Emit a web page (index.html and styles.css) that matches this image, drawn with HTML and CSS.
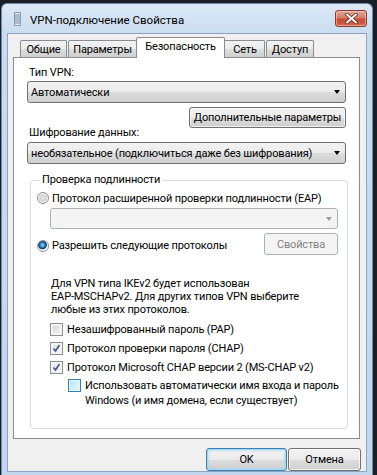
FILE: index.html
```html
<!DOCTYPE html>
<html lang="ru">
<head>
    <meta charset="UTF-8">
    <meta name="viewport" content="width=device-width, initial-scale=1.0">
    <title>VPN-подключение Свойства</title>
    <link rel="stylesheet" href="styles.css">
</head>
<body>
    <div class="window">
        <div class="titlebar">
            <svg class="app-icon" width="7" height="14" viewBox="0 0 7 14">
                <rect x="0.5" y="0.5" width="6" height="13" fill="#e8eef5" stroke="#8d9aab"/>
                <path d="M1 3h5M1 5h5M1 7h5M1 9h5M1 11h5" stroke="#6f86a6" stroke-width="1"/>
            </svg>
            <span class="title">VPN-подключение Свойства</span>
            <div class="close-btn">
                <svg width="13" height="11" viewBox="0 0 13 11">
                    <path d="M2 1.5l9 8M11 1.5l-9 8" stroke="#5a1f18" stroke-width="3.4" stroke-linecap="round"/>
                    <path d="M2 1.5l9 8M11 1.5l-9 8" stroke="#ffffff" stroke-width="2" stroke-linecap="round"/>
                </svg>
            </div>
        </div>

        <div class="client">
            <div class="tabs">
                <div class="tab tab-general">Общие</div>
                <div class="tab tab-options">Параметры</div>
                <div class="tab tab-security active">Безопасность</div>
                <div class="tab tab-network">Сеть</div>
                <div class="tab tab-access">Доступ</div>
            </div>

            <div class="panel">
                <div class="label">Тип VPN:</div>
                <div class="combo">
                    <span>Автоматически</span>
                    <span class="arrow"></span>
                </div>
                <div class="row-right">
                    <div class="btn btn-advanced">Дополнительные параметры</div>
                </div>
                <div class="label label-enc">Шифрование данных:</div>
                <div class="combo combo-enc">
                    <span>необязательное (подключиться даже без шифрования)</span>
                    <span class="arrow"></span>
                </div>

                <fieldset class="group">
                    <legend>Проверка подлинности</legend>
                    <div class="option-row">
                        <span class="radio"></span>
                        <span>Протокол расширенной проверки подлинности (EAP)</span>
                    </div>
                    <div class="combo combo-eap disabled">
                        <span></span>
                        <span class="arrow"></span>
                    </div>
                    <div class="split-row">
                        <div class="option-row">
                            <span class="radio checked"></span>
                            <span>Разрешить следующие протоколы</span>
                        </div>
                        <div class="btn btn-props disabled">Свойства</div>
                    </div>
                    <p class="note">Для VPN типа IKEv2 будет использован<br>EAP-MSCHAPv2. Для других типов VPN выберите<br>любые из этих протоколов.</p>
                    <div class="check-row first">
                        <span class="check"></span>
                        <span>Незашифрованный пароль (PAP)</span>
                    </div>
                    <div class="check-row">
                        <span class="check checked"><svg width="9" height="9" viewBox="0 0 9 9"><path d="M1.5 4.5l2 2.5 4-6" fill="none" stroke="#4c5f8c" stroke-width="1.8"/></svg></span>
                        <span>Протокол проверки пароля (CHAP)</span>
                    </div>
                    <div class="check-row">
                        <span class="check checked"><svg width="9" height="9" viewBox="0 0 9 9"><path d="M1.5 4.5l2 2.5 4-6" fill="none" stroke="#4c5f8c" stroke-width="1.8"/></svg></span>
                        <span>Протокол Microsoft CHAP версии 2 (MS-CHAP v2)</span>
                    </div>
                    <div class="check-row nested">
                        <span class="check hover"></span>
                        <span>Использовать автоматически имя входа и пароль<br>Windows (и имя домена, если существует)</span>
                    </div>
                </fieldset>
            </div>

            <div class="footer">
                <div class="btn btn-ok">OK</div>
                <div class="btn btn-cancel">Отмена</div>
            </div>
        </div>
    </div>
</body>
</html>
```

FILE: styles.css
```css
* {
    margin: 0;
    padding: 0;
    box-sizing: border-box;
}

body {
    height: 475px;
    overflow: hidden;
    background: #1a1f27;
    font-family: Roboto, 'Liberation Sans', Arial, sans-serif;
    font-size: 11px;
    letter-spacing: -0.15px;
    color: #000;
    white-space: nowrap;
}

/* Window frame */
.window {
    display: flex;
    flex-direction: column;
    width: 372px;
    height: 472px;
    margin: 3px 0 0 1px;
    padding: 0 5px 3px 5px;
    background: linear-gradient(#dce9f6 0%, #c9dcf0 30px, #c2d7ee 100%);
    border: 1px solid #6f8aa8;
    border-bottom: none;
    border-radius: 6px 6px 0 0;
}

.titlebar {
    display: flex;
    align-items: center;
    height: 29px;
    flex-shrink: 0;
}

.app-icon {
    margin-left: 7px;
}

.title {
    margin-left: 9px;
    padding-top: 2px;
    font-size: 11.5px;
    letter-spacing: 0;
    color: #000;
}

.close-btn {
    display: flex;
    align-items: center;
    justify-content: center;
    width: 32px;
    height: 17px;
    margin-left: auto;
    border: 1px solid #8a3a30;
    border-radius: 3px;
    background: linear-gradient(#e9a898 0%, #d47a68 45%, #c44a36 55%, #d0644c 100%);
    box-shadow: inset 0 0 0 1px rgba(255, 220, 210, 0.5);
}

/* Client area */
.client {
    flex: 1;
    display: flex;
    flex-direction: column;
    min-height: 0;
    background: #f0f0f0;
    border: 1px solid #8da3bf;
    padding: 0 6px 0 5px;
}

.tabs {
    display: flex;
    align-items: flex-end;
    padding: 3px 0 0 7px;
}

.tab {
    display: flex;
    align-items: center;
    justify-content: center;
    height: 17px;
    margin-right: 1px;
    border: 1px solid #898c95;
    border-bottom: none;
    border-radius: 2px 2px 0 0;
    background: linear-gradient(#f3f3f3, #ebebeb 50%, #dddddd 51%, #cfcfcf);
}

.tab-general { width: 47px; }
.tab-options { width: 69px; }
.tab-network { width: 42px; padding-left: 2px; }
.tab-access { width: 48px; }

.tab.active {
    position: relative;
    z-index: 1;
    width: 89px;
    height: 21px;
    margin: 0 -2px -1px -2px;
    padding-bottom: 3px;
    background: #fff;
}

.panel {
    display: flex;
    flex-direction: column;
    background: #fff;
    border: 1px solid #898c95;
    padding: 8px 13px 9px 13px;
}

.label {
    height: 14px;
    line-height: 14px;
    padding-left: 2px;
}

.label-enc {
    margin-top: -2px;
}

/* Combo boxes */
.combo {
    display: flex;
    align-items: center;
    height: 22px;
    margin-top: 1px;
    padding: 0 5px 0 3px;
    border: 1px solid #707070;
    border-radius: 3px;
    background: linear-gradient(#f2f2f2 0%, #ebebeb 50%, #dddddd 51%, #cfcfcf 100%);
}

.combo-enc {
    margin-top: 2px;
}

.arrow {
    margin-left: auto;
    width: 0;
    height: 0;
    border-left: 3.5px solid transparent;
    border-right: 3.5px solid transparent;
    border-top: 4px solid #000;
}

.combo.disabled {
    height: 21px;
    margin: 2px 0 0 13px;
    border-color: #adb2b5;
    background: #f4f4f4;
}

.combo.disabled .arrow {
    border-top-color: #a0a0a0;
}

/* Buttons */
.btn {
    display: flex;
    align-items: center;
    justify-content: center;
    height: 21px;
    border: 1px solid #707070;
    border-radius: 3px;
    background: linear-gradient(#f2f2f2 0%, #ebebeb 50%, #dddddd 51%, #cfcfcf 100%);
    box-shadow: inset 0 0 0 1px rgba(255, 255, 255, 0.7);
}

.btn.disabled {
    color: #838383;
    border-color: #adb2b5;
    background: #f4f4f4;
    box-shadow: none;
}

.row-right {
    display: flex;
    justify-content: flex-end;
    margin-top: 4px;
}

.btn-advanced { width: 157px; }
.btn-props { width: 74px; height: 22px; }

/* Group box */
.group {
    min-width: 0;
    margin: 9px -2px 0 3px;
    padding: 3px 9px 20px 6px;
    border: 1px solid #d5dfe5;
    border-radius: 3px;
}

.group legend {
    margin-left: 3px;
    padding: 0 2px;
    line-height: 14px;
}

.option-row {
    display: flex;
    align-items: center;
    gap: 3px;
    height: 16px;
}

.radio {
    width: 12px;
    height: 12px;
    border: 1px solid #8e8f8f;
    border-radius: 50%;
    background: radial-gradient(circle at 50% 50%, #e6e6e6 0%, #d2d2d2 45%, #f7f7f7 70%);
}

.radio.checked {
    background: radial-gradient(circle at 45% 40%, #a8dcf8 0%, #3c8ccc 25%, #0d3c6e 48%, #f2f2f2 58%, #ffffff 75%);
}

.split-row {
    display: flex;
    justify-content: space-between;
    align-items: center;
    margin-top: 4px;
}

.split-row .option-row {
    padding-top: 3px;
}

.note {
    margin: 22px 0 0 14px;
    line-height: 13px;
}

.check-row {
    display: flex;
    align-items: center;
    gap: 4px;
    height: 19px;
    margin-left: 13px;
}

.check-row.first {
    margin-top: 4px;
}

.check {
    display: flex;
    align-items: center;
    justify-content: center;
    width: 13px;
    height: 13px;
    flex-shrink: 0;
    border: 1px solid #8e8f8f;
    background: linear-gradient(135deg, #d4d4d4, #f6f6f6);
    box-shadow: inset 0 0 0 2px #f4f4f4;
}

.check.checked {
    background: linear-gradient(135deg, #e2e2e2, #fdfdfd);
}

.check.hover {
    border-color: #3c7fb1;
    background: linear-gradient(135deg, #b9e4f8, #e6f6fd);
    box-shadow: inset 0 0 0 1px #e7f5fc;
}

.check-row.nested {
    align-items: flex-start;
    height: auto;
    margin: 1px 0 0 31px;
    line-height: 15px;
}

.check-row.nested .check {
    margin-top: 1px;
}

/* Footer */
.footer {
    display: flex;
    justify-content: flex-end;
    gap: 1px;
    margin-top: 9px;
}

.btn-ok {
    width: 81px;
    height: 23px;
    border-color: #3c7fb1;
    box-shadow: inset 0 0 0 1px #9fd8f4, inset 0 0 2px 2px rgba(160, 216, 244, 0.5);
}

.btn-cancel {
    width: 73px;
    height: 23px;
    margin-right: -1px;
}
```
